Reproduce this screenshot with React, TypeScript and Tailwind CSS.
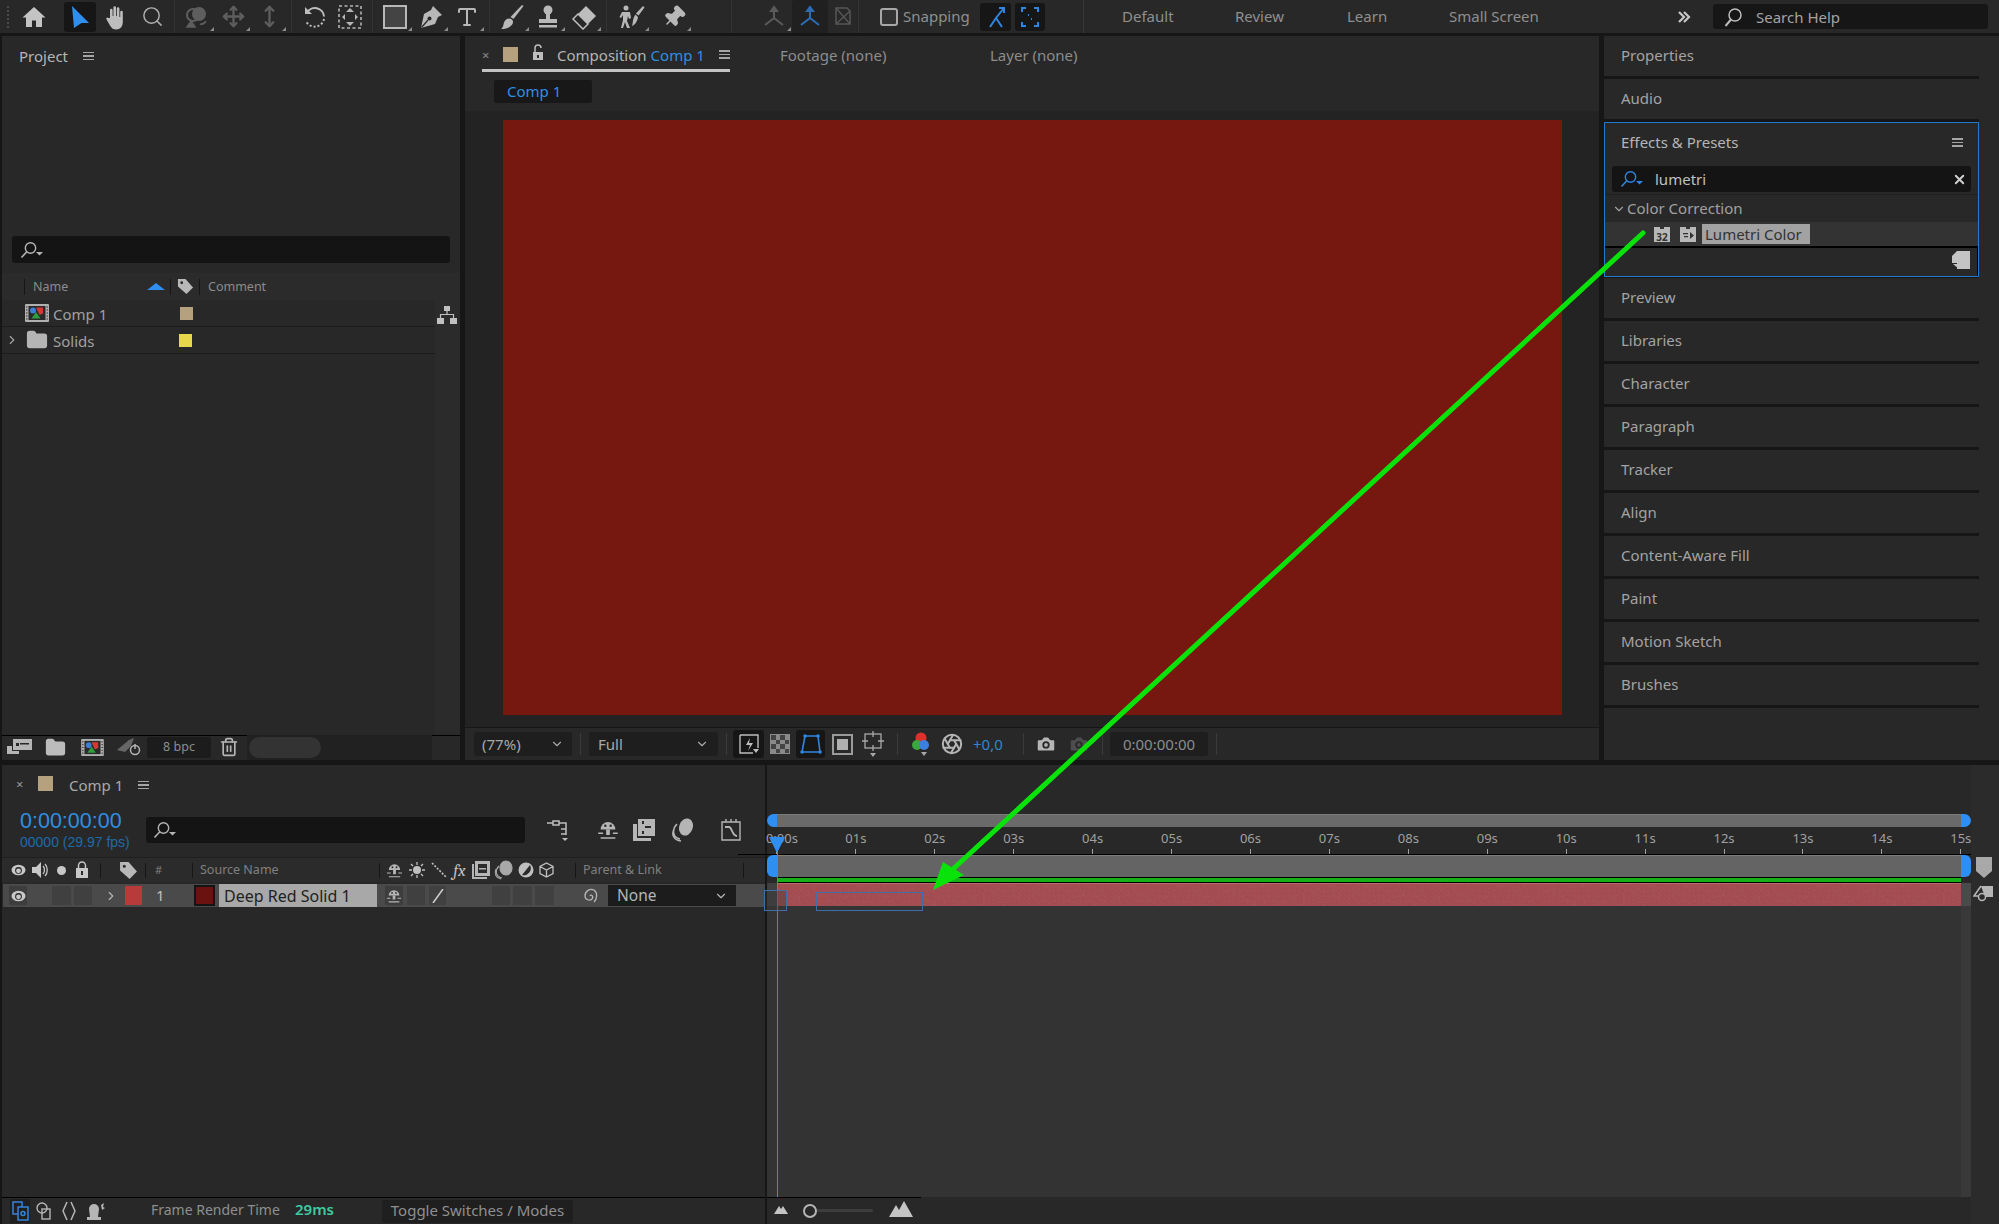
import { ChevronDown, ChevronRight, Search, Move, MoveVertical, Type, Pin, X, Camera, Trash2, Aperture, Folder } from 'lucide-react';
import type { ReactNode } from 'react';

const font = { fontFamily: '"Noto Sans", "Liberation Sans", sans-serif' };

function Corner() {
  return <span className="absolute right-[1px] bottom-[2px] w-0 h-0 border-l-[4px] border-l-transparent border-b-[4px] border-b-[#8a8a8a]" />;
}

function Tool({ children, corner, className = 'w-[36px]' }: { children: ReactNode; corner?: boolean; className?: string }) {
  return (
    <div className={`relative h-[33px] flex items-center justify-center shrink-0 ${className}`}>
      {children}
      {corner && <Corner />}
    </div>
  );
}

function Sep({ className = 'w-[9px]' }: { className?: string }) {
  return (
    <div className={`h-[33px] flex justify-center shrink-0 ${className}`}>
      <div className="w-px h-full bg-[#333333]" />
    </div>
  );
}

function Burger({ className = '' }: { className?: string }) {
  return (
    <div className={`w-[11px] flex flex-col gap-[2px] shrink-0 ${className}`}>
      <div className="h-[1.5px] bg-[#a5a5a5]" />
      <div className="h-[1.5px] bg-[#a5a5a5]" />
      <div className="h-[1.5px] bg-[#a5a5a5]" />
    </div>
  );
}

// magnifier with the little drop arrow, as in every AE search field
function SearchDrop({ color = '#b5b5b5', drop = '#b5b5b5' }: { color?: string; drop?: string }) {
  return (
    <svg width="26" height="18" viewBox="0 0 26 18" fill="none">
      <circle cx="10.5" cy="7" r="5.2" stroke={color} strokeWidth="1.4" />
      <path d="M6.8 10.8 1.5 16.5" stroke={color} strokeWidth="1.6" />
      <path d="M16 11h7l-3.5 3.5z" fill={drop} />
    </svg>
  );
}

function CompIcon({ w = 24, h = 18 }: { w?: number; h?: number }) {
  return (
    <svg width={w} height={h} viewBox="0 0 24 18">
      <rect width="24" height="18" rx="1" fill="#b0b0b0" />
      <rect x="3.5" y="2" width="17" height="14" fill="#2a2a2a" />
      <circle cx="8" cy="6.5" r="3" fill="#3b7fd6" />
      <path d="M11 3.5h7v6l-3.5 1.5z" fill="#d23a34" />
      <path d="M11 8l4.5 6.5h-9z" fill="#2f9e3d" />
      <path d="M1 3h1.5M1 6h1.5M1 9h1.5M1 12h1.5M1 15h1.5M21.5 3H23M21.5 6H23M21.5 9H23M21.5 12H23M21.5 15H23" stroke="#2a2a2a" />
    </svg>
  );
}

function ShyIcon({ size = 18 }: { size?: number }) {
  return (
    <svg width={size} height={size} viewBox="0 0 18 18" fill="#b5b5b5">
      <path d="M3 8.5a6 6 0 0 1 12 0z" />
      <path d="M7.5 8.5h3V13h-3zM1 11h4v1.2H1zM13 11h4v1.2h-4zM3 15h12v1.2H3z" />
      <circle cx="6.8" cy="5.5" r="1" fill="#2a2a2a" />
      <circle cx="11.2" cy="5.5" r="1" fill="#2a2a2a" />
    </svg>
  );
}

function EyeIcon() {
  return (
    <svg width="15" height="12" viewBox="0 0 15 12">
      <ellipse cx="7.5" cy="6" rx="7" ry="5.2" fill="#c8c8c8" />
      <circle cx="7.5" cy="6.4" r="3.4" fill="#2a2a2a" />
      <circle cx="7.5" cy="6.8" r="2.4" fill="#c8c8c8" />
    </svg>
  );
}

function TagIcon({ size = 18 }: { size?: number }) {
  return (
    <svg width={size} height={size} viewBox="0 0 18 18" fill="#b8b8b8">
      <path d="M1 1h8l8 9-7 7-9-8zM5 3.5a1.5 1.5 0 1 0 0 3 1.5 1.5 0 0 0 0-3z" fillRule="evenodd" />
    </svg>
  );
}

function Menu1({ label }: { label: string }) {
  return (
    <div className="h-[40px] flex items-center pl-[17px] pb-[2px] bg-[#282828] text-[15px] text-[#a3a3a3] mb-[3px]">{label}</div>
  );
}

function ToolBar() {
  return (
    <div className="h-[33px] bg-[#282828] flex items-center shrink-0">
      <div className="w-[16px] h-[33px] flex justify-center items-center">
        <div className="w-[3px] h-[22px] border-l-2 border-dotted border-[#4a4a4a]" />
      </div>
      <Tool>
        <svg width="24" height="22" viewBox="0 0 24 22" fill="#c4c4c4"><path d="M12 1 0.5 11.5H4V21h6v-6.5h4V21h6v-9.500h3.500z" /></svg>
      </Tool>
      <div className="w-[10px]" />
      <Tool>
        <div className="w-[32px] h-[30px] rounded-[3px] bg-[#161616] flex items-center justify-center">
          <svg width="19" height="22" viewBox="0 0 19 22" fill="#2f8ff0"><path d="M1 0 18 17H10.500L3 22z" /></svg>
        </div>
      </Tool>
      <Tool>
        <svg width="24" height="26" viewBox="0 0 24 26" fill="#bdbdbd">
          <path d="M6 14V6a1.300 1.300 0 0 1 2.600 0v6h.8V3.500a1.300 1.300 0 0 1 2.600 0V12h.8V4.500a1.300 1.300 0 0 1 2.600 0V13h.8V8a1.300 1.300 0 0 1 2.600 0v10c0 4.500-2.500 7.500-6.500 7.500-3 0-4.500-1-6-3.500L2.500 15.500c-.8-1.500 1-2.800 2-1.500z" />
        </svg>
      </Tool>
      <Tool><Search size={23} color="#b0b0b0" strokeWidth={1.5} /></Tool>
      <Sep />
      <Tool corner>
        <svg width="26" height="24" viewBox="0 0 26 24" fill="#5e5e5e">
          <circle cx="15" cy="9" r="7" />
          <circle cx="9" cy="10" r="6" fill="none" stroke="#5e5e5e" strokeWidth="2" />
          <path d="M7 16l4 6H3zM16 19c3 1 5-1 6-3" stroke="#5e5e5e" strokeWidth="1.5" />
        </svg>
      </Tool>
      <Tool corner><Move size={23} color="#5e5e5e" strokeWidth={2.4} /></Tool>
      <Tool corner><MoveVertical size={23} color="#5e5e5e" strokeWidth={2.4} /></Tool>
      <Sep />
      <Tool>
        <svg width="24" height="24" viewBox="0 0 24 24" fill="none" stroke="#bdbdbd">
          <path d="M5 8a9 9 0 0 1 17 3.500" strokeWidth="2" />
          <path d="M22 14a9.500 9.500 0 0 1-18 2" strokeWidth="2" strokeDasharray="2 2" />
          <path d="M3 2v7h7z" fill="#bdbdbd" stroke="none" />
        </svg>
      </Tool>
      <Tool>
        <svg width="24" height="24" viewBox="0 0 24 24" fill="#b5b5b5">
          <rect x="1" y="1" width="22" height="22" fill="none" stroke="#b5b5b5" strokeWidth="1.6" strokeDasharray="3 2.500" />
          <path d="M8 7h8l-4-4zM8 17h8l-4 4zM7 9v6l-3-3zM17 9v6l3-3z" />
        </svg>
      </Tool>
      <Sep />
      <Tool corner>
        <div className="w-[24px] h-[24px] border-2 border-[#b8b8b8] bg-[#444444]" />
      </Tool>
      <Tool corner>
        <svg width="24" height="24" viewBox="0 0 24 24">
          <path d="M14 1 23 10 19 12 16 19 2 23 5 9 12 5z" fill="#b8b8b8" />
          <circle cx="10.500" cy="13.500" r="2" fill="#282828" />
          <path d="M2.500 22.500 9 15" stroke="#282828" strokeWidth="1.200" />
        </svg>
      </Tool>
      <Tool corner><Type size={24} color="#b8b8b8" strokeWidth={2} /></Tool>
      <Sep />
      <Tool corner>
        <svg width="24" height="26" viewBox="0 0 24 26" fill="#b8b8b8">
          <path d="M22 1l1.500 1-10 13-3-2z" />
          <path d="M9 14.500c3 0 5 2.500 3.500 5.500-1.500 3-6 5-11.500 5 3-2 2-5 3.500-7.500 1-2 2.500-3 4.500-3z" />
        </svg>
      </Tool>
      <Tool corner>
        <svg width="24" height="24" viewBox="0 0 24 24" fill="#b8b8b8">
          <circle cx="12" cy="5" r="4.500" />
          <path d="M10 8h4v6h-4zM3 14h18v4H3zM3 20h18v2.500H3z" />
        </svg>
      </Tool>
      <Tool corner>
        <svg width="26" height="26" viewBox="0 0 26 26">
          <path d="M15 2 25 12 12 25 2 15z" fill="#bdbdbd" />
          <path d="M7 10 17 20 12 25 2 15z" fill="#282828" stroke="#bdbdbd" strokeWidth="1.500" />
        </svg>
      </Tool>
      <Sep />
      <Tool corner className="w-[36px] ml-[3px]">
        <svg width="26" height="24" viewBox="0 0 26 24" fill="#b8b8b8">
          <circle cx="7" cy="3" r="2.500" />
          <path d="M3 7h8l1 6-2 1-1-3-1 5 3 7H8l-2-6-2 6H2l2-8V10l-2 3-1.500-1z" />
          <path d="M24 1l1.500 1.500-6 8-2.500-2zM16.500 9.500l2.500 2.500c-.500 4-3 8-6 9 1-2 .500-8 3.500-11.500z" />
        </svg>
      </Tool>
      <Tool corner className="w-[36px] ml-[6px]"><Pin size={24} fill="#b8b8b8" color="#b8b8b8" strokeWidth={1.5} className="rotate-45" /></Tool>
      <div className="w-[35px]" />
      <Sep />
      <Tool corner className="w-[36px] ml-[20px]">
        <svg width="24" height="24" viewBox="0 0 24 24" fill="none" stroke="#5a5a5a" strokeWidth="2"><path d="M12 2v11L3 20M12 13l9 7" /><path d="M9 6l3-4 3 4z" fill="#5a5a5a" /></svg>
      </Tool>
      <Tool className="w-[36px] bg-[#202020] rounded-[3px]">
        <svg width="24" height="24" viewBox="0 0 24 24" fill="none" stroke="#2d6cb5" strokeWidth="2"><path d="M12 2v11L3 20M12 13l9 7" /><path d="M9 6l3-4 3 4z" fill="#2d6cb5" /></svg>
      </Tool>
      <Tool className="w-[30px]">
        <svg width="20" height="22" viewBox="0 0 20 22" fill="none" stroke="#555555" strokeWidth="1.500"><path d="M3 2h11l3 3v13H3zM3 2l14 16M17 5 3 18" /></svg>
      </Tool>
      <div className="w-[10px]"><div className="w-px h-[33px] bg-[#333333]" /></div>
      <div className="w-[12px]" />
      <div className="w-[18px] h-[18px] border-2 border-[#a8a8a8] rounded-[3px] bg-[#333333] shrink-0" />
      <span className="ml-[5px] w-[77px] text-[15px] text-[#8f8f8f]">Snapping</span>
      <div className="w-[31px] h-[28px] rounded-[3px] bg-[#161616] flex items-center justify-center">
        <svg width="20" height="22" viewBox="0 0 20 22" fill="none" stroke="#2f86e0" strokeWidth="2"><path d="M4 21l6-9 6 9M10 12l8-10M13 2h5v5" /></svg>
      </div>
      <div className="w-[30px] h-[28px] ml-[4px] rounded-[3px] bg-[#161616] flex items-center justify-center">
        <svg width="18" height="20" viewBox="0 0 18 20" fill="none" stroke="#2f86e0" strokeWidth="2"><path d="M1 5V1h4M13 1h4v4M17 15v4h-4M5 19H1v-4M7 8h1M10 12h1M1 10h.1M17 10h.1" /></svg>
      </div>
      <div className="w-[77px] flex justify-center"><div className="w-px h-[33px] bg-[#383838]" /></div>
      <span className="w-[113px] text-[15px] text-[#8f8f8f] whitespace-nowrap">Default</span>
      <span className="w-[112px] text-[15px] text-[#8f8f8f] whitespace-nowrap">Review</span>
      <span className="w-[102px] text-[15px] text-[#8f8f8f] whitespace-nowrap">Learn</span>
      <span className="w-[228px] text-[15px] text-[#8f8f8f] whitespace-nowrap">Small Screen</span>
      <svg width="14" height="14" viewBox="0 0 14 14" fill="none" stroke="#c8c8c8" strokeWidth="2.200"><path d="M2 2l5 5-5 5M7 2l5 5-5 5" /></svg>
      <div className="w-[22px]" />
      <div className="w-[275px] h-[25px] bg-[#161616] rounded-[3px] flex items-center pl-[10px] shrink-0">
        <svg width="20" height="20" viewBox="0 0 20 20" fill="none" stroke="#bdbdbd" strokeWidth="1.500"><circle cx="12" cy="8" r="6" /><path d="M8 12.500 2.500 19" strokeWidth="2" /></svg>
        <span className="ml-[13px] pt-[2px] text-[15px] text-[#a3a3a3]">Search Help</span>
      </div>
    </div>
  );
}

function ProjectPanel() {
  return (
    <div className="w-[458px] ml-[2px] mr-[5px] bg-[#282828] flex flex-col shrink-0">
      <div className="h-[42px] flex items-center pl-[17px] pb-[2px] shrink-0">
        <span className="text-[15px] text-[#b5b5b5]">Project</span>
        <Burger className="ml-[15px]" />
      </div>
      <div className="h-[158px] shrink-0" />
      <div className="h-[27px] mx-[10px] bg-[#141414] rounded-[3px] flex items-center pl-[8px] shrink-0">
        <SearchDrop />
      </div>
      <div className="h-[10px] shrink-0" />
      <div className="h-[27px] flex items-center bg-[#2b2b2b] text-[12.5px] text-[#8c8c8c] shrink-0">
        <div className="w-[22px]" />
        <div className="w-px h-[16px] bg-[#161616]" />
        <span className="ml-[8px] w-[114px] pt-[2px]">Name</span>
        <div className="w-0 h-0 border-x-[9px] border-x-transparent border-b-[7px] border-b-[#2f8ff0]" />
        <div className="ml-[5px] w-px h-[16px] bg-[#161616]" />
        <div className="w-[28px] flex justify-center"><TagIcon size={17} /></div>
        <div className="w-px h-[16px] bg-[#161616]" />
        <span className="ml-[8px] pt-[2px]">Comment</span>
      </div>
      <div className="flex-1 flex min-h-0">
        <div className="w-[433px] flex flex-col">
          <div className="h-[27px] flex items-center border-b border-[#1c1c1c] text-[15px] text-[#a0a0a0]">
            <div className="ml-[23px]"><CompIcon /></div>
            <span className="ml-[4px] w-[127px] pt-[2px]">Comp 1</span>
            <div className="w-[13px] h-[13px] bg-[#b5a17e]" />
          </div>
          <div className="h-[27px] flex items-center border-b border-[#1c1c1c] text-[15px] text-[#a0a0a0]">
            <ChevronRight size={14} color="#a0a0a0" className="ml-[3px]" />
            <Folder size={22} fill="#b5b5b5" color="#b5b5b5" className="ml-[7px]" />
            <span className="ml-[5px] w-[126px] pt-[2px]">Solids</span>
            <div className="w-[13px] h-[13px] bg-[#e6d84a]" />
          </div>
          <div className="flex-1" />
        </div>
        <div className="flex-1 bg-[#2b2b2b] pt-[6px] pl-[2px]">
          <svg width="20" height="18" viewBox="0 0 20 18" fill="#c0c0c0">
            <path d="M7 0h6v5H7zM0 12h7v6H0zM13 12h7v6h-7z" />
            <path d="M10 5v3.500M3.500 12V8.500h13V12" fill="none" stroke="#c0c0c0" strokeWidth="1.200" />
          </svg>
        </div>
      </div>
      <div className="h-[25px] border-t border-black flex items-center pb-[2px] shrink-0">
        <div className="ml-[5px] w-[36px]">
          <svg width="26" height="18" viewBox="0 0 26 18" fill="#b5b5b5"><path d="M6 1h19v11H6zM9 5h3v3H9zM13 5h9v1.500h-9z" fillRule="evenodd" /><path d="M0 8h5v5h7v3H0z" /></svg>
        </div>
        <Folder size={21} fill="#bcbcbc" color="#bcbcbc" className="ml-[2px]" />
        <div className="ml-[14px]"><CompIcon w={25} h={17} /></div>
        <div className="ml-[12px] w-[25px]">
          <svg width="25" height="18" viewBox="0 0 25 18" fill="none"><path d="M0 12 12 2l5-2-3 8-6 6z" fill="#666666" /><circle cx="18" cy="12" r="4.500" stroke="#b5b5b5" strokeWidth="1.500" /><path d="M18 6v5" stroke="#b5b5b5" strokeWidth="1.500" /></svg>
        </div>
        <div className="ml-[5px] w-[64px] h-[21px] bg-[#1c1c1c] rounded-[2px] flex items-center justify-center text-[12.5px] text-[#8c8c8c]">8 bpc</div>
        <Trash2 size={20} color="#b5b5b5" className="ml-[8px]" />
        <div className="ml-[8px] h-[25px] w-[185px] bg-[#212121] flex items-center pl-[2px]">
          <div className="w-[72px] h-[21px] rounded-full bg-[#333333]" />
        </div>
      </div>
    </div>
  );
}

function ViewerBar() {
  return (
    <div className="h-[33px] border-t border-[#161616] bg-[#282828] flex items-center text-[#a8a8a8] shrink-0">
      <div className="ml-[9px] w-[98px] h-[24px] bg-[#1e1e1e] rounded-[3px] flex items-center justify-between px-[8px] text-[15px]">
        (77%)<ChevronDown size={14} />
      </div>
      <div className="mx-[8px] w-px h-[22px] bg-[#3a3a3a]" />
      <div className="w-[129px] h-[24px] bg-[#1e1e1e] rounded-[3px] flex items-center justify-between px-[9px] text-[15px]">
        Full<ChevronDown size={14} />
      </div>
      <div className="ml-[8px] mr-[6px] w-px h-[22px] bg-[#3a3a3a]" />
      <div className="w-[31px] h-[28px] bg-[#161616] rounded-[3px] flex items-center justify-center">
        <svg width="20" height="20" viewBox="0 0 20 20" fill="none" stroke="#bdbdbd" strokeWidth="1.400"><path d="M1 1h18v13M1 1v18h13" /><path d="M11 4l-4 7h4l-2 6 5-8h-4z" fill="#bdbdbd" stroke="none" /><path d="M14 15h6l-3 4z" fill="#bdbdbd" stroke="none" /></svg>
      </div>
      <div className="w-[32px] flex justify-center">
        <div className="w-[20px] h-[20px] border border-[#8a8a8a] grid grid-cols-4 grid-rows-4">
          {Array.from({ length: 16 }).map((_, i) => (
            <div key={i} className={(i + (i >> 2)) % 2 ? 'bg-[#8a8a8a]' : 'bg-[#444444]'} />
          ))}
        </div>
      </div>
      <div className="w-[29px] h-[28px] bg-[#161616] rounded-[3px] flex items-center justify-center">
        <svg width="22" height="20" viewBox="0 0 22 20" fill="none" stroke="#2f86e0" strokeWidth="1.600"><path d="M5 2h13l2 16H2z" /><path d="M5 2h.1M18 2h.1M2 18h.1M20 18h.1" strokeWidth="3.500" strokeLinecap="round" /></svg>
      </div>
      <div className="w-[34px] flex justify-center">
        <div className="w-[21px] h-[21px] border-2 border-[#9a9a9a] flex items-center justify-center"><div className="w-[11px] h-[11px] bg-[#b0b0b0]" /></div>
      </div>
      <div className="w-[28px] flex justify-center">
        <svg width="22" height="26" viewBox="0 0 22 26" fill="none" stroke="#a8a8a8" strokeWidth="1.300"><rect x="3" y="3" width="16" height="14" /><path d="M11 0v6M11 14v6M0 10h6M16 10h6" /><path d="M8 22h6l-3 4z" fill="#a8a8a8" stroke="none" /></svg>
      </div>
      <div className="ml-[10px] w-px h-[22px] bg-[#3a3a3a]" />
      <div className="ml-[13px] w-[26px]">
        <svg width="20" height="26" viewBox="0 0 20 26">
          <circle cx="10" cy="7" r="5.500" fill="#e0302a" />
          <circle cx="6" cy="14" r="5" fill="#3aa83a" />
          <circle cx="13" cy="14" r="5" fill="#3b7fe0" />
          <path d="M10 21h6l-3 4z" fill="#a8a8a8" />
        </svg>
      </div>
      <Aperture size={22} color="#b5b5b5" strokeWidth={2.200} className="ml-[4px]" />
      <span className="ml-[10px] w-[50px] text-[15px] text-[#2f86d0]">+0,0</span>
      <div className="w-px h-[22px] bg-[#3a3a3a]" />
      <Camera size={22} fill="#b5b5b5" color="#282828" className="ml-[11px]" />
      <Camera size={22} fill="#4d4d4d" color="#282828" className="ml-[11px]" />
      <div className="ml-[12px] w-px h-[22px] bg-[#3a3a3a]" />
      <div className="ml-[7px] w-[98px] h-[24px] bg-[#1e1e1e] rounded-[3px] flex items-center justify-center text-[15px] text-[#8c8c8c]">0:00:00:00</div>
      <div className="ml-[8px] w-px h-[22px] bg-[#3a3a3a]" />
    </div>
  );
}

function CompPanel() {
  return (
    <div className="w-[1134px] mr-[5px] bg-[#282828] flex flex-col shrink-0">
      <div className="h-[36px] flex items-start pt-[11px] text-[15px] shrink-0">
        <div className="ml-[17px] w-[248px] h-[25px] border-b-[3px] border-[#c4c4c4] flex items-start">
          <span className="w-[16px] text-[#8c8c8c] text-[13px] leading-[16px]">×</span>
          <div className="ml-[5px] w-[15px] h-[15px] bg-[#b5a17e]" />
          <svg width="14" height="18" viewBox="0 0 14 18" className="ml-[13px] -mt-[3px]" fill="#bdbdbd"><path d="M2 8h10v8H2zM6 11h2v3H6z" fillRule="evenodd" /><path d="M4 8V4a3 3 0 0 1 6 0" fill="none" stroke="#bdbdbd" strokeWidth="1.500" /></svg>
          <span className="ml-[12px] text-[#b5b5b5] leading-[16px] whitespace-nowrap">Composition</span>
          <span className="ml-[4px] text-[#2f8fe0] leading-[16px] whitespace-nowrap">Comp 1</span>
          <Burger className="ml-[14px] mt-[3px]" />
        </div>
        <span className="ml-[50px] w-[210px] text-[#8c8c8c] leading-[16px]">Footage (none)</span>
        <span className="text-[#8c8c8c] leading-[16px]">Layer (none)</span>
      </div>
      <div className="h-[39px] pt-[8px] pl-[29px] shrink-0">
        <div className="w-[98px] h-[23px] bg-[#181818] rounded-[2px] flex items-center pl-[13px] text-[15px] text-[#2f8fe0]">Comp 1</div>
      </div>
      <div className="h-[9px] bg-[#232323] shrink-0" />
      <div className="flex-1 bg-[#232323] pl-[38px] pb-[12px] min-h-0">
        <div className="w-[1059px] h-full bg-[#761810]" />
      </div>
      <ViewerBar />
    </div>
  );
}

function RightPanels() {
  return (
    <div className="flex-1 bg-[#282828] flex flex-col">
      <div className="w-[375px] bg-[#161616] flex flex-col">
        <Menu1 label="Properties" />
        <Menu1 label="Audio" />
        <div className="h-[155px] border border-[#2378cf] bg-[#282828] flex flex-col">
          <div className="h-[39px] flex items-center justify-between pl-[16px] pr-[15px] shrink-0">
            <span className="text-[15px] text-[#b5b5b5]">Effects &amp; Presets</span>
            <Burger />
          </div>
          <div className="h-[26px] mt-[4px] mx-[7px] bg-[#141414] rounded-[3px] flex items-center pl-[8px] pr-[4px] shrink-0">
            <SearchDrop color="#2f86e0" drop="#2f86e0" />
            <span className="ml-[9px] flex-1 text-[15px] text-[#c0c0c0]">lumetri</span>
            <X size={15} color="#d0d0d0" strokeWidth={3} />
          </div>
          <div className="h-[28px] mt-[2px] flex items-center border-t border-[#1f1f1f] pl-[7px] text-[15px] text-[#a0a0a0] shrink-0">
            <ChevronDown size={14} />
            <span className="ml-[1px]">Color Correction</span>
          </div>
          <div className="h-[24px] bg-[#333333] flex items-center pl-[48px] shrink-0">
            <svg width="18" height="18" viewBox="0 0 18 18"><path d="M1 2h6v2h4V2h6v15H1z" fill="#b8b8b8" /><text x="9" y="15.500" fontSize="10" fontWeight="700" textAnchor="middle" fill="#333333" style={font}>32</text></svg>
            <svg width="18" height="18" viewBox="0 0 18 18" className="ml-[8px]"><path d="M1 2h6v2h4V2h6v15H1z" fill="#b8b8b8" /><path d="M4 8h5v1.300H4zM5 11h4v1.300H5zM11 7l4 3.500-4 3.500z" fill="#333333" /></svg>
            <div className="ml-[5px] w-[108px] h-[20px] bg-[#a2a2a2] flex items-center pl-[3px] text-[15px] text-[#333333] whitespace-nowrap">Lumetri Color</div>
          </div>
          <div className="flex-1 border-t-[2px] border-black flex justify-end items-start">
            <div className="h-full pt-[3px] pr-[7px] border-r border-black">
              <svg width="18" height="18" viewBox="0 0 18 18" fill="#c4c4c4"><path d="M5 0h13v18H5v-6H0V5zM1 13h6v5z" /></svg>
            </div>
          </div>
        </div>
        <div className="h-[1px]" />
        {['Preview', 'Libraries', 'Character', 'Paragraph', 'Tracker', 'Align', 'Content-Aware Fill', 'Paint', 'Motion Sketch', 'Brushes'].map((n) => (
          <Menu1 key={n} label={n} />
        ))}
      </div>
    </div>
  );
}

function Dark({ w, children, className = '' }: { w: string; children?: ReactNode; className?: string }) {
  return <div className={`h-[19px] flex items-center justify-center shrink-0 ${w} ${className}`}>{children}</div>;
}

function TimelineLeft() {
  const head = 'shrink-0 flex justify-center items-center';
  return (
    <div className="w-[763px] flex flex-col shrink-0">
      <div className="h-[40px] flex items-center pl-[14px] shrink-0">
        <span className="text-[13px] text-[#9a9a9a] w-[22px]">×</span>
        <div className="w-[15px] h-[15px] bg-[#b5a17e] -mt-[3px]" />
        <span className="ml-[16px] text-[15px] text-[#a8a8a8]">Comp 1</span>
        <Burger className="ml-[15px]" />
      </div>
      <div className="h-[52px] flex items-center shrink-0">
        <div className="w-[144px] pl-[18px] -mt-[2px] font-['Liberation_Sans']">
          <div className="text-[21.5px] leading-[25px] text-[#2f8fe0]">0:00:00:00</div>
          <div className="text-[14px] leading-[17px] text-[#1f6aa8] whitespace-nowrap">00000 (29.97 fps)</div>
        </div>
        <div className="w-[379px] h-[26px] bg-[#141414] rounded-[3px] flex items-center pl-[7px] -mt-[2px]">
          <SearchDrop />
        </div>
        <div className="ml-[20px] w-[36px] -mt-[2px]">
          <svg width="24" height="24" viewBox="0 0 24 24" fill="none" stroke="#bdbdbd" strokeWidth="1.500"><path d="M2 5h6M8 3h6v4H8zM14 5h7v12M16 11h5M16 16h5" /><path d="M17 20h6l-3 3z" fill="#bdbdbd" stroke="none" /></svg>
        </div>
        <div className="ml-[16px] w-[30px] -mt-[2px]"><ShyIcon size={22} /></div>
        <div className="ml-[6px] w-[34px] -mt-[2px]">
          <svg width="22" height="22" viewBox="0 0 22 22" fill="#b5b5b5"><path d="M5 0h17v17H5zM9 2v3h2V2zM9 12v3h2v-3zM12 7v2h6V7z" fillRule="evenodd" /><path d="M0 5h4v14h14v3H0z" /></svg>
        </div>
        <div className="ml-[4px] w-[34px] -mt-[2px]">
          <svg width="24" height="24" viewBox="0 0 24 24" fill="none" stroke="#b5b5b5" strokeWidth="1.500"><ellipse cx="15" cy="9" rx="6" ry="8" transform="rotate(20 15 9)" fill="#b5b5b5" /><path d="M6 6c-5 5-5 13 3 15M3 11c-3 6 0 11 7 12" /></svg>
        </div>
        <div className="ml-[15px] -mt-[2px]">
          <svg width="22" height="24" viewBox="0 0 22 24" fill="none" stroke="#b5b5b5" strokeWidth="1.400"><path d="M2 4h18v18H2zM6 1v3M11 1v3M16 1v3" /><path d="M5 9h4c3 0 3 9 8 9" strokeWidth="1.800" /></svg>
        </div>
      </div>
      <div className="h-[25px] bg-[#2b2b2b] border-t border-[#1f1f1f] flex items-center text-[12.5px] text-[#808080] shrink-0">
        <div className="w-[5px]" />
        <div className={`${head} w-[22px]`}><EyeIcon /></div>
        <div className={`${head} w-[22px]`}>
          <svg width="18" height="18" viewBox="0 0 18 18" fill="#c8c8c8"><path d="M1 6h4l5-5v16l-5-5H1z" /><path d="M12 5c2 2 2 6 0 8M14 3c3 3 3 9 0 12" fill="none" stroke="#c8c8c8" strokeWidth="1.300" /></svg>
        </div>
        <div className={`${head} w-[20px]`}><div className="w-[9px] h-[9px] rounded-full bg-[#c8c8c8]" /></div>
        <div className={`${head} w-[22px]`}>
          <svg width="14" height="18" viewBox="0 0 14 18" fill="#c8c8c8"><path d="M1 7h12v10H1zM6 10h2v4H6z" fillRule="evenodd" /><path d="M3.500 7V4.500a3.500 3.500 0 0 1 7 0V7" fill="none" stroke="#c8c8c8" strokeWidth="1.500" /></svg>
        </div>
        <div className="ml-[7px] w-px h-[15px] bg-[#161616]" />
        <div className={`${head} w-[44px] pl-[10px]`}><TagIcon size={19} /></div>
        <div className="w-px h-[15px] bg-[#161616]" />
        <span className="ml-[9px] w-[37px] text-[11px]">#</span>
        <div className="w-px h-[15px] bg-[#161616]" />
        <span className="ml-[7px] w-[179px] pt-[1px]">Source Name</span>
        <div className="w-px h-[15px] bg-[#161616]" />
        <div className="ml-[6px] w-[20px]"><ShyIcon size={17} /></div>
        <div className={`${head} w-[22px]`}>
          <svg width="16" height="16" viewBox="0 0 16 16" fill="#c0c0c0"><circle cx="8" cy="8" r="4" /><path d="M8 0v3M8 13v3M0 8h3M13 8h3M2 2l2 2M12 12l2 2M14 2l-2 2M4 12l-2 2" stroke="#c0c0c0" strokeWidth="1.300" /></svg>
        </div>
        <div className={`${head} w-[21px]`}>
          <svg width="16" height="16" viewBox="0 0 16 16" fill="none" stroke="#c0c0c0" strokeWidth="1.600" strokeDasharray="2 1.500"><path d="M1 1l14 14" /></svg>
        </div>
        <div className={`${head} w-[21px]`}><span className="italic font-serif text-[#c0c0c0] text-[17px] leading-none">fx</span></div>
        <div className={`${head} w-[21px]`}>
          <svg width="18" height="18" viewBox="0 0 18 18" fill="#b5b5b5"><path d="M3 0h15v15H3zM6 3v9h9V3z" fillRule="evenodd" /><path d="M0 3h2v13h13v2H0zM7 7h7v1.500H7z" /></svg>
        </div>
        <div className={`${head} w-[24px]`}>
          <svg width="20" height="20" viewBox="0 0 20 20" fill="none" stroke="#a8a8a8" strokeWidth="1.200"><ellipse cx="13" cy="8" rx="6" ry="7" fill="#a8a8a8" /><path d="M6 6c-4 4-4 10 3 12M3 9c-2 5 0 9 5 10" /></svg>
        </div>
        <div className={`${head} w-[21px]`}>
          <svg width="16" height="16" viewBox="0 0 16 16"><circle cx="8" cy="8" r="7.500" fill="#c0c0c0" /><path d="M12 3A7 7 0 0 1 4 13z" fill="#2b2b2b" /></svg>
        </div>
        <div className={`${head} w-[21px]`}>
          <svg width="15" height="16" viewBox="0 0 15 16" fill="none" stroke="#c0c0c0" strokeWidth="1.300"><path d="M7.500 1 14 4.500v7L7.500 15 1 11.500v-7zM1 4.500l6.500 3.500L14 4.500M7.500 8v7" /></svg>
        </div>
        <div className="ml-[18px] w-px h-[15px] bg-[#161616]" />
        <span className="ml-[7px] w-[160px] pt-[1px]">Parent &amp; Link</span>
        <div className="w-px h-[15px] bg-[#161616]" />
      </div>
      <div className="h-[2px]" />
      <div className="h-[23px] bg-[#4a4a4a] flex items-center text-[16px] shrink-0 ml-[1px] -mr-[1px]">
        <Dark w="w-[18px]" className="ml-[6px] bg-[#3d3d3d]"><EyeIcon /></Dark>
        <Dark w="w-[19px]" className="ml-[25px] bg-[#404040]" />
        <Dark w="w-[18px]" className="ml-[3px] bg-[#404040]" />
        <ChevronRight size={14} color="#b5b5b5" className="ml-[12px]" />
        <div className="ml-[7px] w-[17px] h-[19px] bg-[#b93a3a]" />
        <span className="ml-[14px] w-[38px] text-[15px] text-[#c0c0c0]">1</span>
        <div className="w-[21px] h-[21px] bg-[#6a1210] border-2 border-[#141414]" />
        <div className="ml-[4px] w-[158px] h-[23px] bg-[#a8a8a8] flex items-center pl-[5px] text-[#222222] whitespace-nowrap">Deep Red Solid 1</div>
        <Dark w="w-[18px]" className="ml-[8px] bg-[#3d3d3d]"><ShyIcon size={16} /></Dark>
        <Dark w="w-[18px]" className="ml-[4px] bg-[#404040]" />
        <Dark w="w-[17px]" className="ml-[4px] bg-[#404040]">
          <svg width="14" height="14" viewBox="0 0 14 14" stroke="#d0d0d0" strokeWidth="1.500"><path d="M2 14 12 0" /></svg>
        </Dark>
        <Dark w="w-[18px]" className="ml-[46px] bg-[#404040]" />
        <Dark w="w-[19px]" className="ml-[3px] bg-[#404040]" />
        <Dark w="w-[19px]" className="ml-[3px] bg-[#404040]" />
        <div className="ml-[27px] w-[18px]">
          <svg width="18" height="18" viewBox="0 0 18 18" fill="none" stroke="#b5b5b5" strokeWidth="1.300"><path d="M9 9c1-2 4 0 2 3-2 2-7 1-7-3 0-5 5-8 9-6 4 3 3 9 0 12" /></svg>
        </div>
        <div className="ml-[9px] w-[128px] h-[21px] bg-[#1c1c1c] flex items-center justify-between pl-[9px] pr-[8px] text-[15.500px] text-[#b5b5b5]">
          None<ChevronDown size={14} />
        </div>
      </div>
      <div className="flex-1" />
      <div className="h-[27px] border-t border-black flex items-center text-[#8f8f8f] shrink-0">
        <div className="ml-[8px] w-[20px] h-[24px] bg-[#1f1f1f] flex items-center justify-center">
          <svg width="17" height="20" viewBox="0 0 17 20" fill="none" stroke="#2f86e0" strokeWidth="1.500"><rect x="1" y="1" width="9" height="12" /><rect x="6" y="6" width="10" height="13" fill="#1f1f1f" /><circle cx="11" cy="12.500" r="2" /></svg>
        </div>
        <svg width="16" height="20" viewBox="0 0 16 20" fill="none" stroke="#b5b5b5" strokeWidth="1.400" className="ml-[6px]"><circle cx="6" cy="7" r="5" /><rect x="6" y="8" width="8" height="10" /></svg>
        <svg width="16" height="20" viewBox="0 0 16 20" fill="none" stroke="#b5b5b5" strokeWidth="1.500" className="ml-[9px]"><path d="M6 1 2 10l4 9M10 1l4 9-4 9" /></svg>
        <svg width="20" height="20" viewBox="0 0 20 20" fill="#b5b5b5" className="ml-[9px]"><path d="M3 8a5 5 0 0 1 10 0l-1 8H4zM1 16h14v3H1zM15 4l3-2-1 4 2 1-3 2z" /></svg>
        <span className="ml-[45px] w-[146px] whitespace-nowrap text-[14px] -mt-[4px]">Frame Render Time</span>
        <span className="ml-[-2px] w-[54px] font-semibold text-[15px] text-[#3ec9a0] -mt-[4px]">29ms</span>
        <div className="ml-[33px] w-[191px] h-[23px] bg-[#1f1f1f] rounded-[3px] flex items-center justify-center whitespace-nowrap text-[15px] pb-[2px]">Toggle Switches / Modes</div>
      </div>
    </div>
  );
}

const seconds = ['0:00s', '01s', '02s', '03s', '04s', '05s', '06s', '07s', '08s', '09s', '10s', '11s', '12s', '13s', '14s', '15s'];

function TimelineRight() {
  return (
    <div className="flex-1 relative flex min-w-0">
      <div className="w-[1204px] flex flex-col shrink-0">
        <div className="h-[48px] shrink-0" />
        {/* time navigator */}
        <div className="h-[14px] flex items-center shrink-0">
          <div className="w-[10px] h-[13px] rounded-l-full bg-[#2f8ff0] shrink-0" />
          <div className="w-[1184px] h-[13px] bg-[#6a6a6a] border-t border-[#7a7a7a] shrink-0" />
          <div className="w-[10px] h-[13px] rounded-r-full bg-[#2f8ff0] shrink-0" />
        </div>
        <div className="relative z-10 h-[28px] border-b border-black flex -ml-[29.5px] pt-[3px] shrink-0">
          {seconds.map((s) => (
            <div key={s} className="w-[78.93px] shrink-0 flex flex-col items-center">
              <span className="text-[13px] leading-[17px] text-[#a0a0a0]">{s === '0:00s' ? <span className="ml-[10px]">{s}</span> : s}</span>
              <div className="mt-[2px] w-px h-[6px] bg-[#a0a0a0]" />
            </div>
          ))}
        </div>
        {/* work area */}
        <div className="h-[22px] flex items-center shrink-0">
          <div className="w-[10px] h-[22px] rounded-l-[6px] bg-[#2f8ff0] shrink-0" />
          <div className="w-[1184px] h-[22px] bg-[#646464] border-t border-[#7c7c7c] shrink-0" />
          <div className="w-[10px] h-[22px] rounded-r-[6px] bg-[#2f8ff0] shrink-0" />
        </div>
        <div className="h-[6px] ml-[10px] mr-[10px] bg-[#18b018] border-y border-black shrink-0" />
        <div className="h-[23px] flex shrink-0">
          <div className="w-[10px] bg-[#404040] shrink-0" />
          <div className="relative w-[1184px] bg-[#a54b50] border-t border-[#bb6a6e] overflow-hidden shrink-0">
            <svg className="absolute inset-0 w-full h-full opacity-20">
              <filter id="grain"><feTurbulence baseFrequency="0.8" numOctaves="2" /><feColorMatrix type="saturate" values="0" /></filter>
              <rect width="100%" height="100%" filter="url(#grain)" />
            </svg>
          </div>
          <div className="w-[10px] bg-[#4a4a4a] shrink-0" />
        </div>
        <div className="flex-1 flex">
          <div className="w-[1194px] bg-[#333333] shrink-0" />
          <div className="w-[10px] bg-[#393939] shrink-0" />
        </div>
        {/* zoom slider */}
        <div className="h-[27px] bg-[#282828] relative flex items-center shrink-0">
          <div className="absolute left-0 top-0 w-[154px] h-px bg-black" />
          <svg width="14" height="10" viewBox="0 0 14 10" fill="#c4c4c4" className="ml-[7px] -mt-[3px]"><path d="M0 10 5 2l2 3 2-3 5 8z" /></svg>
          <div className="ml-[15px] w-[14px] h-[14px] rounded-full border-2 border-[#b5b5b5] bg-[#282828] z-10 shrink-0" />
          <div className="w-[56px] h-[3px] bg-[#3d3d3d] rounded-r-full shrink-0" />
          <svg width="24" height="16" viewBox="0 0 24 16" fill="#c4c4c4" className="ml-[16px] -mt-[3px]"><path d="M0 16 7 4l3 5 5-9 9 16z" /></svg>
        </div>
      </div>
      {/* rail at the far right */}
      <div className="flex-1 bg-[#2b2b2b] pl-[5px]">
        <div className="h-[92px]" />
        <svg width="16" height="21" viewBox="0 0 16 21" fill="#a8a8a8"><path d="M0 0h16v14l-8 7-8-7z" /></svg>
        <div className="h-[6px]" />
        <svg width="20" height="18" viewBox="0 0 20 18" fill="none" className="-ml-[3px]"><path d="M8 2h12v11H12z" fill="#b5b5b5" /><path d="M8 2 1 12h8" stroke="#b5b5b5" strokeWidth="1.500" /><circle cx="9" cy="13" r="3.500" fill="#2b2b2b" stroke="#b5b5b5" strokeWidth="1.500" /></svg>
      </div>
      {/* playhead + guide rects sit on top of the bars */}
      <div className="absolute z-20 left-[9.5px] top-[85px] bottom-[27px] w-px bg-[#2f8ff0]" />
      <div className="absolute z-20 left-[2px] top-[72px] w-0 h-0 border-x-[8px] border-x-transparent border-t-[16px] border-t-[#2f8ff0]" />
      <div className="absolute z-20 -left-[3px] top-[125px] w-[23px] h-[21px] border border-[#3f6ea8] bg-[#3a3a3a]/40" />
      <div className="absolute z-20 left-[49px] top-[127px] w-[107px] h-[19px] border border-[#3f6ea8]" />
    </div>
  );
}

export default function App() {
  return (
    <div className="relative w-[1999px] h-[1224px] overflow-hidden bg-[#161616] flex flex-col" style={font}>
      <ToolBar />
      <div className="h-[3px] shrink-0" />
      <div className="h-[724px] flex shrink-0">
        <ProjectPanel />
        <CompPanel />
        <RightPanels />
      </div>
      <div className="h-[5px] shrink-0" />
      <div className="flex-1 ml-[2px] flex bg-[#282828] min-h-0">
        <TimelineLeft />
        <div className="w-[2px] bg-[#161616] shrink-0" />
        <TimelineRight />
      </div>
      {/* annotation arrow drawn over the screenshot */}
      <svg className="absolute inset-0 pointer-events-none z-30" width="1999" height="1224" viewBox="0 0 1999 1224">
        <path d="M1643 233 952 870" stroke="#0ae30a" strokeWidth="5" strokeLinecap="round" fill="none" />
        <path d="M933 890 943 862 964 875z" fill="#0ae30a" />
      </svg>
    </div>
  );
}
